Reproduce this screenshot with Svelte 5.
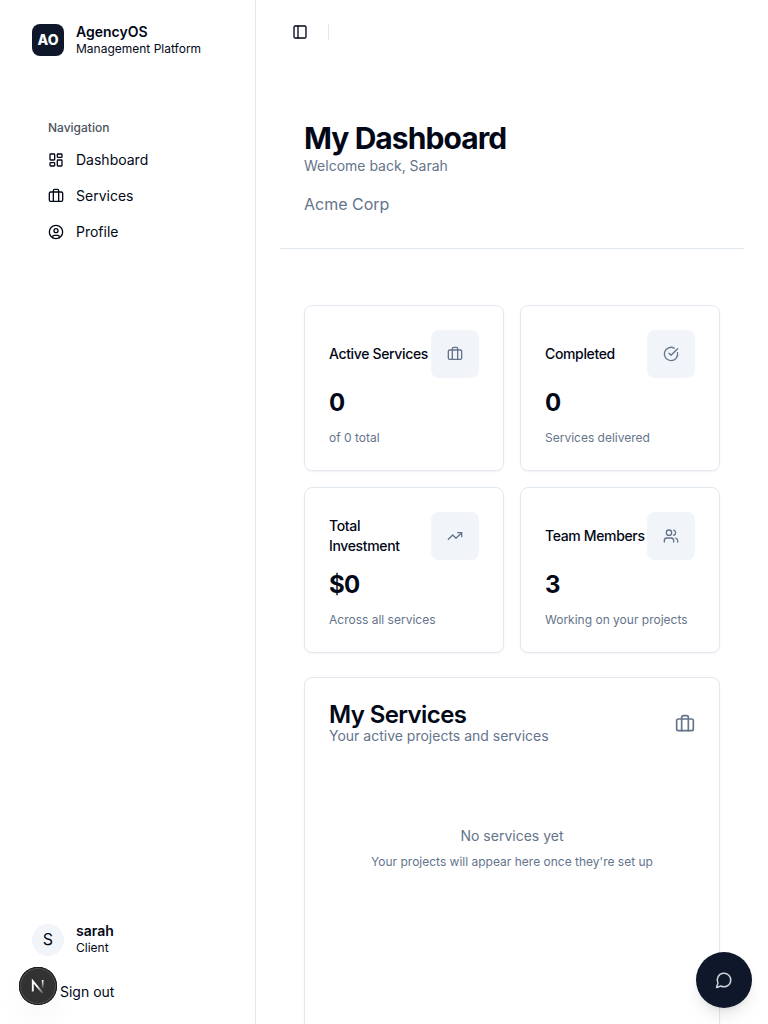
<script>
  const nav = [
    { label: 'Dashboard', icon: 'dashboard' },
    { label: 'Services', icon: 'luggage' },
    { label: 'Profile', icon: 'user' }
  ];
  const stats = [
    { title: 'Active Services', value: '0', note: 'of 0 total', icon: 'luggage' },
    { title: 'Completed', value: '0', note: 'Services delivered', icon: 'check' },
    { title: 'Total Investment', value: '$0', note: 'Across all services', icon: 'trend' },
    { title: 'Team Members', value: '3', note: 'Working on your projects', icon: 'team' }
  ];
</script>

{#snippet icon(name, size)}
  <svg class="icon" width={size} height={size} viewBox="0 0 24 24">
    {#if name === 'dashboard'}
      <rect x="3" y="3" width="7" height="9" rx="1" />
      <rect x="14" y="3" width="7" height="5" rx="1" />
      <rect x="14" y="12" width="7" height="9" rx="1" />
      <rect x="3" y="16" width="7" height="5" rx="1" />
    {:else if name === 'luggage'}
      <path d="M16 20V4a2 2 0 0 0-2-2h-4a2 2 0 0 0-2 2v16" />
      <rect x="2" y="6" width="20" height="14" rx="2" />
    {:else if name === 'user'}
      <circle cx="12" cy="12" r="10" />
      <circle cx="12" cy="10" r="3" />
      <path d="M7 20.662V19a2 2 0 0 1 2-2h6a2 2 0 0 1 2 2v1.662" />
    {:else if name === 'check'}
      <path d="M21.801 10A10 10 0 1 1 17 3.335" />
      <path d="m9 11 3 3L22 4" />
    {:else if name === 'trend'}
      <path d="M22 7l-8.500 8.500-5-5L2 17" />
      <path d="M16 7h6v6" />
    {:else if name === 'team'}
      <path d="M16 21v-2a4 4 0 0 0-4-4H6a4 4 0 0 0-4 4v2" />
      <circle cx="9" cy="7" r="4" />
      <path d="M22 21v-2a4 4 0 0 0-3-3.870" />
      <path d="M16 3.130a4 4 0 0 1 0 7.750" />
    {:else if name === 'panel'}
      <rect x="3" y="3" width="18" height="18" rx="2" />
      <path d="M9 3v18" />
    {:else if name === 'chat'}
      <path d="M7.900 20A9 9 0 1 0 4 16.100L2 22Z" />
    {/if}
  </svg>
{/snippet}

<div class="app">
  <aside class="sidebar">
    <header class="brand">
      <div class="mark">AO</div>
      <div class="ident">
        <strong>AgencyOS</strong>
        <span>Management Platform</span>
      </div>
    </header>
    <nav>
      <div class="nav-label">Navigation</div>
      {#each nav as item}
        <div class="nav-item">{@render icon(item.icon, 16)}<span>{item.label}</span></div>
      {/each}
    </nav>
    <footer>
      <div class="account">
        <div class="avatar">S</div>
        <div class="ident">
          <strong>sarah</strong>
          <span>Client</span>
        </div>
      </div>
      <div class="signout">Sign out</div>
    </footer>
  </aside>

  <main>
    <div class="topbar">
      {@render icon('panel', 16)}
      <span class="rule"></span>
    </div>
    <section class="heading">
      <h1>My Dashboard</h1>
      <p class="welcome">Welcome back, Sarah</p>
      <p class="company">Acme Corp</p>
    </section>
    <div class="content">
      <div class="stats">
        {#each stats as s}
          <article class="card">
            <div class="card-head">
              <h3>{s.title}</h3>
              <div class="tile">{@render icon(s.icon, 16)}</div>
            </div>
            <div class="value">{s.value}</div>
            <p class="note">{s.note}</p>
          </article>
        {/each}
      </div>
      <section class="card services">
        <div class="services-head">
          <div>
            <h2>My Services</h2>
            <p>Your active projects and services</p>
          </div>
          {@render icon('luggage', 20)}
        </div>
        <div class="empty">
          <p class="empty-title">No services yet</p>
          <p class="empty-note">Your projects will appear here once they're set up</p>
        </div>
      </section>
    </div>
  </main>

  <div class="dev-badge">
    <svg width="38" height="38" viewBox="1 1 38 38">
      <defs>
        <linearGradient id="diag" gradientUnits="userSpaceOnUse" x1="20" y1="20" x2="26" y2="28">
          <stop offset="0" stop-color="#fff" />
          <stop offset="1" stop-color="#fff" stop-opacity="0" />
        </linearGradient>
        <linearGradient id="stem" gradientUnits="userSpaceOnUse" x1="0" y1="14" x2="0" y2="23">
          <stop offset="0" stop-color="#fff" />
          <stop offset="1" stop-color="#fff" stop-opacity="0" />
        </linearGradient>
      </defs>
      <path d="M14.800 25.500V15.200L24.600 27" fill="none" stroke="url(#diag)" stroke-width="1.900" />
      <path d="M24.700 14v9" fill="none" stroke="url(#stem)" stroke-width="1.700" />
    </svg>
  </div>
  <div class="chat">{@render icon('chat', 18)}</div>
</div>

<style>
  :global(body) { margin: 0; overflow: hidden; }
  .app {
    position: relative;
    display: flex;
    width: 768px;
    height: 1024px;
    overflow: hidden;
    background: #fff;
    color: #020817;
    font-family: Inter, sans-serif;
    font-size: 14px;
    line-height: 20px;
  }
  h1, h2, h3, p { margin: 0; }
  .icon {
    display: block;
    flex: none;
    fill: none;
    stroke: currentColor;
    stroke-width: 2;
    stroke-linecap: round;
    stroke-linejoin: round;
    overflow: visible;
  }
  .sidebar {
    box-sizing: border-box;
    flex: none;
    width: 256px;
    display: flex;
    flex-direction: column;
    border-right: 1px solid #e2e8f0;
  }
  .brand, .account { display: flex; align-items: center; gap: 12px; }
  .brand { padding: 23px 32px 0; }
  .mark, .avatar {
    box-sizing: border-box;
    width: 32px;
    height: 32px;
    display: flex;
    align-items: center;
    justify-content: center;
    background: #0f172a;
    color: #f8fafc;
    border-radius: 8px;
    font-weight: 800;
  }
  .ident { display: grid; line-height: 17.500px; }
  .ident strong { font-weight: 600; }
  .ident span { font-size: 12px; line-height: 16px; }
  nav { padding: 55px 32px 0; }
  .nav-label {
    height: 32px;
    padding: 0 16px;
    line-height: 32px;
    font-size: 12px;
    font-weight: 500;
    color: #4e525d;
  }
  .nav-item {
    display: flex;
    align-items: center;
    gap: 12px;
    height: 32px;
    padding: 0 16px;
    margin-bottom: 4px;
  }
  footer { margin-top: auto; padding: 0 32px 22px; }
  .account { height: 34px; }
  .account .ident { height: 34px; line-height: 17px; grid-template-rows: 17px 16px; row-gap: 1px; margin-top: -2px; }
  .avatar { padding-bottom: 2px; background: #f1f5f9; color: #020817; border-radius: 50%; font-size: 16px; font-weight: 400; }
  .signout { padding: 25px 0 0 28px; }

  main { flex: 1; min-width: 0; }
  .topbar { display: flex; align-items: center; gap: 20px; height: 64px; padding-left: 36px; }
  .rule { width: 1px; height: 16px; background: #e2e8f0; }
  .heading {
    margin: 0 24px;
    padding: 56px 24px 32px;
    border-bottom: 1px solid #e2e8f0;
  }
  h1 { font-size: 30px; line-height: 36px; font-weight: 700; letter-spacing: -0.930px; }
  .welcome, .company, .note, .services p { color: #64748b; }
  .company { margin-top: 16px; font-size: 16px; line-height: 24px; }
  .content { padding: 56px 48px 0; }
  .stats { display: grid; grid-template-columns: 1fr 1fr; gap: 16px; }
  .card {
    box-sizing: border-box;
    border: 1px solid #e2e8f0;
    border-radius: 8px;
    padding: 24px;
    box-shadow: 0 1px 2px rgba(0, 0, 0, 0.050);
  }
  .card-head { display: flex; align-items: center; justify-content: space-between; }
  h3 { font-size: 14px; line-height: 20px; font-weight: 500; letter-spacing: -0.350px; }
  .tile {
    flex: none;
    width: 48px;
    height: 48px;
    display: flex;
    align-items: center;
    justify-content: center;
    border-radius: 8px;
    background: #f1f5f9;
    color: #64748b;
  }
  .value { margin-top: 9px; font-size: 24px; line-height: 32px; font-weight: 700; letter-spacing: -0.600px; }
  .note { margin-top: 11px; font-size: 12px; line-height: 16px; }
  .services { height: 420px; margin-top: 24px; }
  .services-head { display: flex; align-items: center; justify-content: space-between; color: #64748b; }
  .services-head .icon { margin-bottom: 1px; }
  h2 { padding-top: 1px; font-size: 24px; line-height: 23px; font-weight: 600; letter-spacing: -0.600px; color: #020817; }
  .empty { padding-top: 80px; text-align: center; }
  .services .empty-note { margin-top: 8px; font-size: 12px; line-height: 16px; }

  .dev-badge {
    position: absolute;
    left: 19px;
    top: 967px;
    width: 38px;
    height: 38px;
    border-radius: 50%;
    background: #323232;
    box-shadow: inset 0 0 0 1px #171717, inset 0 0 0 2px #505050, 0 16px 32px -8px rgba(0, 0, 0, 0.100);
  }
  .chat {
    position: absolute;
    left: 696px;
    top: 952px;
    width: 56px;
    height: 56px;
    display: flex;
    align-items: center;
    justify-content: center;
    border-radius: 50%;
    background: #0f172a;
    color: #cbd0d8;
    box-shadow: 0 10px 15px -3px rgba(0, 0, 0, 0.100), 0 4px 6px -4px rgba(0, 0, 0, 0.100);
  }
</style>
